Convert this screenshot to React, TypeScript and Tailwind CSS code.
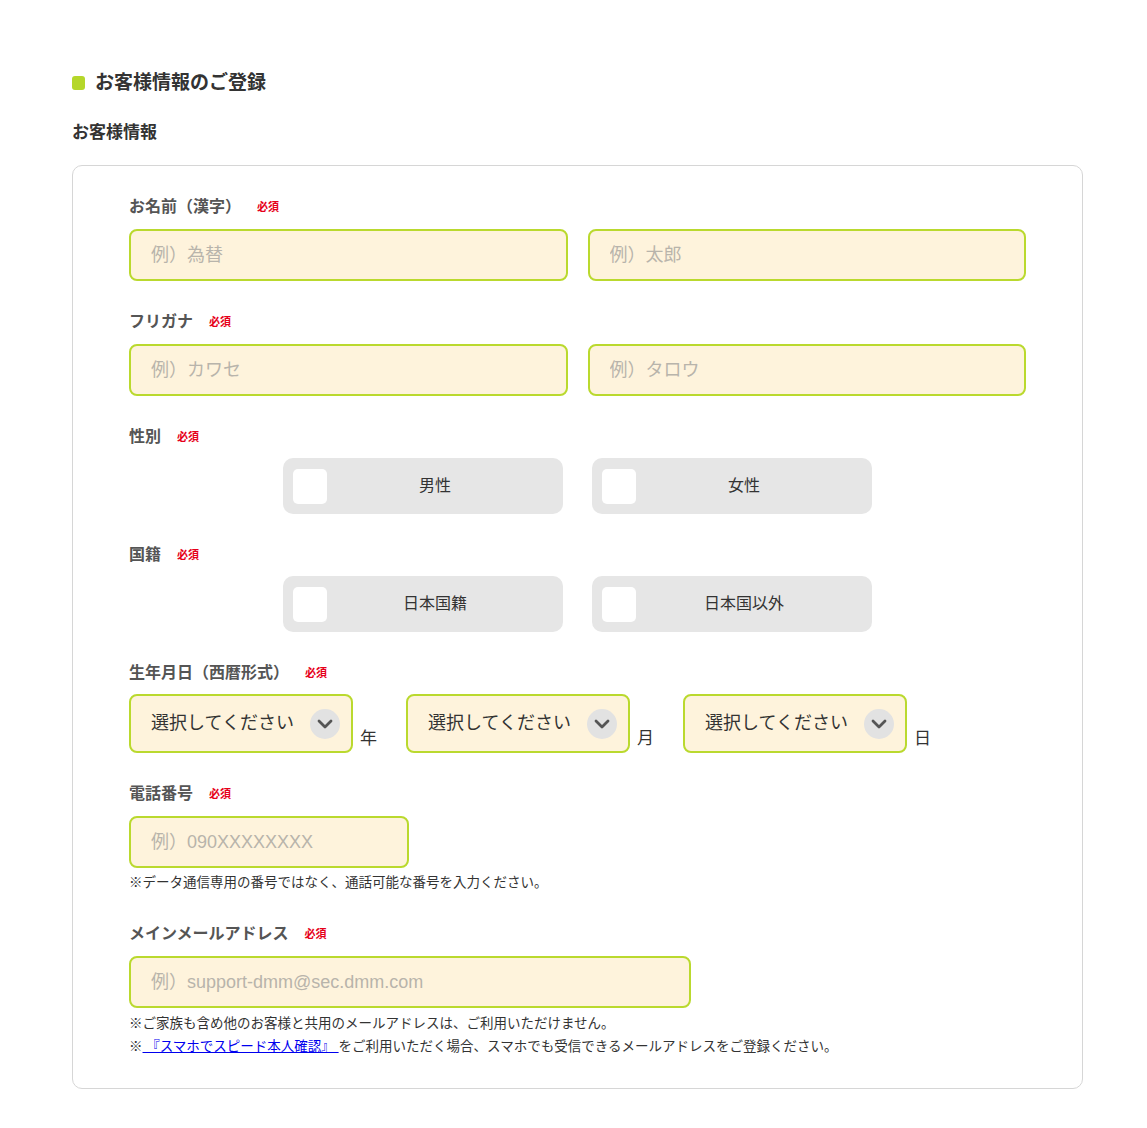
import { useState } from "react"

const font = { fontFamily: '"Liberation Sans", "Noto Sans CJK JP", sans-serif' }

const Required = () => (
  <span className="ml-4 text-[11px] font-bold leading-none text-[#e60019]">必須</span>
)

const Label = ({ children }: { children: React.ReactNode }) => (
  <div className="flex h-5 items-center">
    <span className="text-[16px] font-bold leading-5 text-[#555]">{children}</span>
    <Required />
  </div>
)

const TextInput = ({ placeholder, className = "" }: { placeholder: string; className?: string }) => (
  <input
    type="text"
    placeholder={placeholder}
    style={font}
    className={`h-[52px] rounded-lg border-2 border-[#bad92e] bg-[#fef3dc] pl-[20px] text-[18px] text-[#333] outline-none placeholder:text-[#b8b4ab] ${className}`}
  />
)

const Choice = ({ label, checked, onClick }: { label: string; checked: boolean; onClick: () => void }) => (
  <button
    type="button"
    onClick={onClick}
    style={font}
    className="flex h-[56px] w-[280px] items-center rounded-[10px] bg-[#e6e6e6] pl-[10px]"
  >
    <span className="flex h-[35px] w-[34px] items-center justify-center rounded-[5px] bg-white">
      {checked && <span className="h-3 w-3 rounded-sm bg-[#bad92e]" />}
    </span>
    <span className="flex-1 pr-[20px] text-center text-[16px] text-[#333]">{label}</span>
  </button>
)

const Select = ({ unit }: { unit: string }) => (
  <div className="flex items-end">
    <div className="relative h-[59px] w-[224px]">
      <select
        style={font}
        defaultValue=""
        className="h-full w-full appearance-none rounded-lg border-2 border-[#bad92e] bg-[#fef3dc] pl-[20px] text-[18px] text-[#333] outline-none"
      >
        <option value="">選択してください</option>
      </select>
      <span className="pointer-events-none absolute right-[13px] top-1/2 flex h-[30px] w-[30px] -translate-y-1/2 items-center justify-center rounded-full bg-[#e2e2e2]">
        <svg width="16" height="10" viewBox="0 0 16 10" fill="none">
          <path d="M2 2l6 6 6-6" stroke="#555" strokeWidth="2.8" strokeLinecap="round" strokeLinejoin="round" />
        </svg>
      </span>
    </div>
    <span className="ml-[7px] pb-[4px] text-[17px] leading-5 text-[#333]">{unit}</span>
  </div>
)

export default function App() {
  const [gender, setGender] = useState("")
  const [nation, setNation] = useState("")

  return (
    <div style={font} className="min-h-[1128px] bg-white pt-[69px] text-[#333]">
      <div className="ml-[72px] w-[1011px]">
        <h2 className="flex h-7 items-center">
          <span className="h-[14px] w-[13px] rounded-[3px] bg-[#b5d72a]" />
          <span className="ml-[10px] text-[19px] font-bold text-[#333]">お客様情報のご登録</span>
        </h2>
        <h3 className="mt-6 flex h-6 items-center text-[17px] font-bold text-[#333]">お客様情報</h3>

        <div className="mt-[20px] rounded-[10px] border border-[#d6d6d6] px-[56px] pb-[30px] pt-[31px]">
          <Label>お名前（漢字）</Label>
          <div className="mt-3 flex gap-5">
            <TextInput placeholder="例）為替" className="w-[439px]" />
            <TextInput placeholder="例）太郎" className="w-[439px]" />
          </div>

          <div className="mt-[31px]">
            <Label>フリガナ</Label>
          </div>
          <div className="mt-3 flex gap-5">
            <TextInput placeholder="例）カワセ" className="w-[439px]" />
            <TextInput placeholder="例）タロウ" className="w-[439px]" />
          </div>

          <div className="mt-[31px]">
            <Label>性別</Label>
          </div>
          <div className="ml-[154px] mt-[11px] flex gap-[29px]">
            <Choice label="男性" checked={gender === "m"} onClick={() => setGender("m")} />
            <Choice label="女性" checked={gender === "f"} onClick={() => setGender("f")} />
          </div>

          <div className="mt-[31px]">
            <Label>国籍</Label>
          </div>
          <div className="ml-[154px] mt-[11px] flex gap-[29px]">
            <Choice label="日本国籍" checked={nation === "jp"} onClick={() => setNation("jp")} />
            <Choice label="日本国以外" checked={nation === "other"} onClick={() => setNation("other")} />
          </div>

          <div className="mt-[31px]">
            <Label>生年月日（西暦形式）</Label>
          </div>
          <div className="mt-[11px] flex gap-[29px]">
            <Select unit="年" />
            <Select unit="月" />
            <Select unit="日" />
          </div>

          <div className="mt-[31px]">
            <Label>電話番号</Label>
          </div>
          <div className="mt-3 flex">
            <TextInput placeholder="例）090XXXXXXXX" className="w-[280px]" />
          </div>
          <p className="mt-[5px] text-[13.5px] leading-5 text-[#333]">
            ※データ通信専用の番号ではなく、通話可能な番号を入力ください。
          </p>

          <div className="mt-[31px]">
            <Label>メインメールアドレス</Label>
          </div>
          <div className="mt-3 flex">
            <TextInput placeholder="例）support-dmm@sec.dmm.com" className="w-[562px]" />
          </div>
          <p className="mt-[4px] text-[13.5px] leading-[23px] text-[#333]">
            ※ご家族も含め他のお客様と共用のメールアドレスは、ご利用いただけません。
          </p>
          <p className="text-[13.5px] leading-[23px] text-[#333]">
            ※<a href="#" className="text-[#0000ee] underline"> 『スマホでスピード本人確認』 </a>
            をご利用いただく場合、スマホでも受信できるメールアドレスをご登録ください。
          </p>
        </div>
      </div>
    </div>
  )
}
